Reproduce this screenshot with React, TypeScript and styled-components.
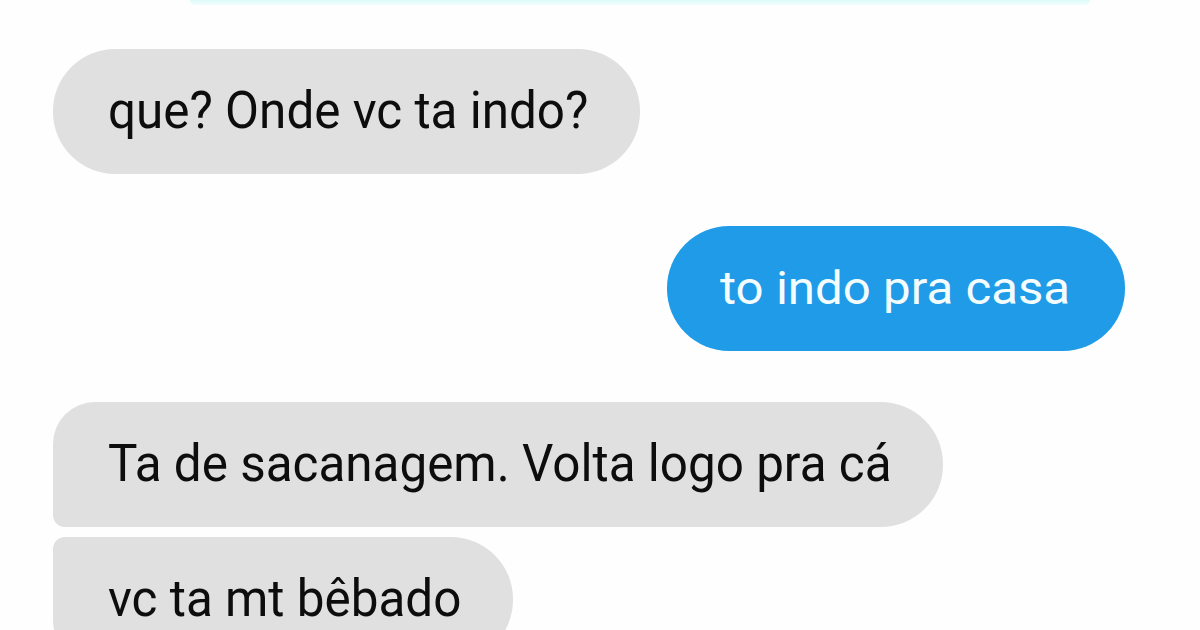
import React from "react";
import styled, { createGlobalStyle } from "styled-components";

const GlobalStyle = createGlobalStyle`
	html, body {
		margin: 0;
		padding: 0;
		background: #ffffff;
		overflow: hidden;
	}
	body {
		font-family: Roboto, "Noto Sans", "Liberation Sans", sans-serif;
	}
`;

const Screen = styled.div`
	width: 1200px;
	height: 630px;
	display: flex;
	flex-direction: column;
	background: #fefefe;
	overflow: hidden;
`;

const TopGlow = styled.div`
	flex: none;
	margin-left: 190px;
	width: 900px;
	height: 5px;
	border-radius: 0 0 6px 6px;
	background: linear-gradient(to bottom, #dcfbfb, #f3fdfc);
`;

const Row = styled.div<{ $mine?: boolean; $gap: number }>`
	flex: none;
	display: flex;
	justify-content: ${(p) => (p.$mine ? "flex-end" : "flex-start")};
	margin-top: ${(p) => p.$gap}px;
	padding: ${(p) => (p.$mine ? "0 75px 0 0" : "0 0 0 53px")};
`;

type Corner = "full" | "top" | "bottom";

const Bubble = styled.div<{ $mine?: boolean; $w: number; $corner?: Corner }>`
	box-sizing: border-box;
	flex: none;
	width: ${(p) => p.$w}px;
	height: 125px;
	display: flex;
	align-items: center;
	padding-left: ${(p) => (p.$mine ? 53 : 55)}px;
	border-radius: ${(p) =>
		p.$corner === "top"
			? "42px 62px 62px 12px"
			: p.$corner === "bottom"
			? "12px 62px 62px 42px"
			: "62px"};
	background: ${(p) => (p.$mine ? "#1f9be8" : "#e0e0e0")};
	color: ${(p) => (p.$mine ? "#f4fdfd" : "#0d0d0d")};
`;

const Text = styled.span<{ $mine?: boolean }>`
	display: inline-block;
	white-space: nowrap;
	line-height: 1;
	font-size: ${(p) => (p.$mine ? 46 : 52)}px;
	transform-origin: left center;
	transform: ${(p) => (p.$mine ? "scaleX(1.07)" : "scaleX(0.95)")};
	margin-top: ${(p) => (p.$mine ? -2 : -2)}px;
`;

const App = () => {
	return (
		<>
			<GlobalStyle />
			<Screen>
				<TopGlow />
				<Row $gap={44}>
					<Bubble $w={587}>
						<Text>que? Onde vc ta indo?</Text>
					</Bubble>
				</Row>
				<Row $gap={52} $mine>
					<Bubble $w={458} $mine>
						<Text $mine>to indo pra casa</Text>
					</Bubble>
				</Row>
				<Row $gap={51}>
					<Bubble $w={890} $corner="top">
						<Text>Ta de sacanagem. Volta logo pra cá</Text>
					</Bubble>
				</Row>
				<Row $gap={10}>
					<Bubble $w={460} $corner="bottom">
						<Text>vc ta mt bêbado</Text>
					</Bubble>
				</Row>
			</Screen>
		</>
	);
};

export default App;
